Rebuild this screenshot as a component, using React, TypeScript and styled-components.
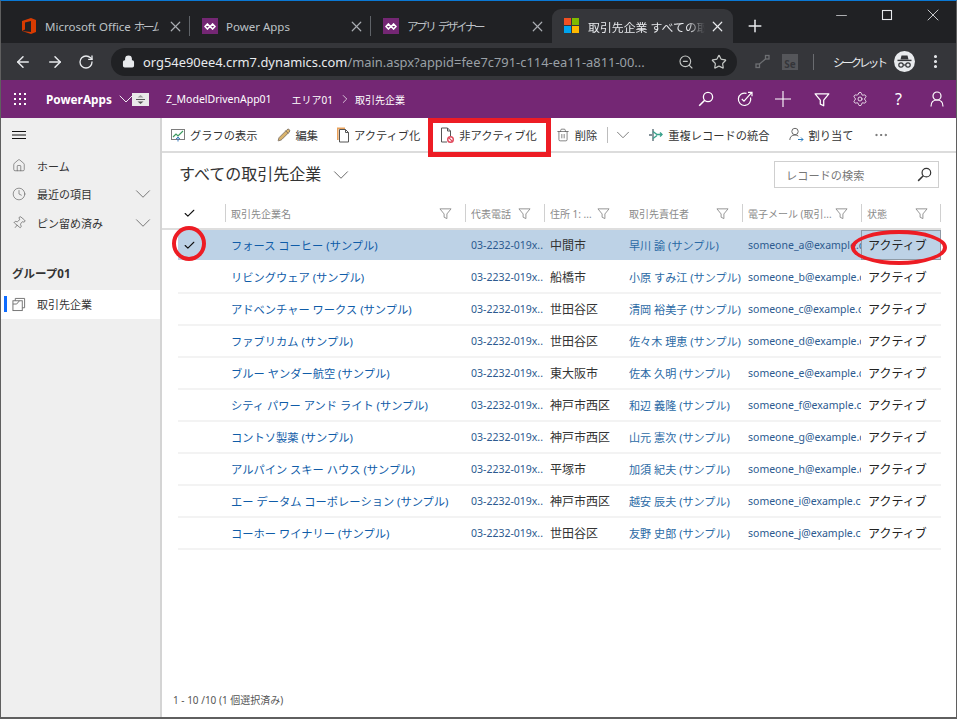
import styled, { createGlobalStyle } from 'styled-components';
import {
  ArrowLeft,
  ArrowRight,
  Check,
  ChevronDown,
  ChevronRight,
  Clock,
  Ellipsis,
  EllipsisVertical,
  House,
  Lock,
  Minus,
  Pencil,
  Pin,
  RotateCw,
  Settings,
  Star,
  Trash2,
  X,
  Plus,
  ZoomOut,
} from 'lucide-react';

const ACCOUNTS = [
  ['フォース コーヒー (サンプル)', '中間市', '早川 諭 (サンプル)', 'someone_a@example.com'],
  ['リビングウェア (サンプル)', '船橋市', '小原 すみ江 (サンプル)', 'someone_b@example.com'],
  ['アドベンチャー ワークス (サンプル)', '世田谷区', '清岡 裕美子 (サンプル)', 'someone_c@example.com'],
  ['ファブリカム (サンプル)', '世田谷区', '佐々木 理恵 (サンプル)', 'someone_d@example.com'],
  ['ブルー ヤンダー航空 (サンプル)', '東大阪市', '佐本 久明 (サンプル)', 'someone_e@example.com'],
  ['シティ パワー アンド ライト (サンプル)', '神戸市西区', '和辺 義隆 (サンプル)', 'someone_f@example.com'],
  ['コントソ製薬 (サンプル)', '神戸市西区', '山元 憲次 (サンプル)', 'someone_g@example.com'],
  ['アルパイン スキー ハウス (サンプル)', '平塚市', '加須 紀夫 (サンプル)', 'someone_h@example.com'],
  ['エー データム コーポレーション (サンプル)', '神戸市西区', '越安 辰夫 (サンプル)', 'someone_i@example.com'],
  ['コーホー ワイナリー (サンプル)', '世田谷区', '友野 史郎 (サンプル)', 'someone_j@example.com'],
];

const GRID_COLUMNS = '47px 240px 79px 79px 119px 119px 80px';

const GlobalStyle = createGlobalStyle`
  html, body { margin: 0; padding: 0; background: #fff; }
  * { box-sizing: border-box; }
  body { font-family: "Noto Sans", "Noto Sans CJK JP", sans-serif; }
`;

function OfficeLogo() {
  return (
    <svg width="16" height="16" viewBox="-1 0 16 16">
      <path d="M0 3 9 0l5 2v12l-5 2-9-3 9 1V3L3 4.5v7L0 13z" fill="#d83b01" />
    </svg>
  );
}

function PowerAppsLogo() {
  return (
    <LogoTile>
      <svg width="12" height="7" viewBox="0 0 12 7" fill="none" stroke="#fff" strokeWidth="1.6">
        <path d="M1 3.5 3.4 1l2.4 2.5L3.4 6zM6.2 3.5 8.6 1 11 3.5 8.6 6z" />
      </svg>
    </LogoTile>
  );
}

function WindowsLogo() {
  return (
    <svg width="20" height="20" viewBox="0 0 20 20">
      <rect x="0" y="2" width="7" height="7" fill="#f25022" />
      <rect x="8" y="2" width="7" height="7" fill="#7fba00" />
      <rect x="0" y="10" width="7" height="7" fill="#00a4ef" />
      <rect x="8" y="10" width="7" height="7" fill="#ffb900" />
    </svg>
  );
}

function IncognitoIcon() {
  return (
    <svg width="21" height="21" viewBox="0 0 21 21">
      <circle cx="10.5" cy="10.5" r="10.5" fill="#e8eaed" />
      <path d="M6.5 8.5 7.5 4.5h6l1 4z" fill="#35363a" />
      <rect x="3.5" y="8.7" width="14" height="1.4" fill="#35363a" />
      <circle cx="7" cy="14" r="2.2" fill="none" stroke="#35363a" strokeWidth="1.2" />
      <circle cx="14" cy="14" r="2.2" fill="none" stroke="#35363a" strokeWidth="1.2" />
      <path d="M9.2 14h2.6" stroke="#35363a" strokeWidth="1.2" />
    </svg>
  );
}

function WaffleIcon() {
  return (
    <svg width="13" height="13" viewBox="0 0 13 13" fill="#fff">
      {[0, 5, 10].flatMap(y =>
        [0, 5, 10].map(x => <rect key={`${x}-${y}`} x={x} y={y} width="2" height="2" />),
      )}
    </svg>
  );
}

function MaximizeIcon() {
  return (
    <svg width="12" height="12" viewBox="0 0 12 12" fill="none" stroke="currentColor" strokeWidth="1.1">
      <rect x="1.5" y="1.5" width="9" height="9" />
    </svg>
  );
}

function SortIcon() {
  return (
    <svg width="17" height="13" viewBox="0 0 17 13">
      <rect width="17" height="13" fill="#e9e9e9" />
      <path d="M5.5 4.5 8.5 2l3 2.5z" fill="#9b9b9b" />
      <rect x="4" y="6" width="9" height="1" fill="#555" />
      <path d="M5.5 8.5h6l-3 2.5z" fill="#555" />
    </svg>
  );
}

function SearchGlyph({ size, color }: { size: number; color: string }) {
  return (
    <svg width={size} height={size} viewBox="0 0 16 16" fill="none" stroke={color} strokeWidth="1.3">
      <circle cx="10" cy="6" r="4.6" />
      <path d="M6.7 9.3 1.2 14.8" strokeWidth="1.6" />
    </svg>
  );
}

function FilterGlyph({ size, color, width = 1 }: { size: number; color: string; width?: number }) {
  return (
    <svg width={size} height={size} viewBox="0 0 14 14" fill="none" stroke={color} strokeWidth={width}>
      <path d="M1 2h12L8.5 7.5V12.5L5.5 11V7.5Z" strokeLinejoin="round" />
    </svg>
  );
}

function TargetIcon() {
  return (
    <svg width="16" height="16" viewBox="0 0 16 16" fill="none" stroke="#fff" strokeWidth="1.2">
      <path d="M13.5 6.5A6.2 6.2 0 1 1 9.5 2.4" />
      <path d="m4.8 8 2.2 2.2L14.6 1.6M11 1.3h4v4" />
    </svg>
  );
}

function PlusGlyph() {
  return (
    <svg width="16" height="16" viewBox="0 0 16 16" stroke="#fff" strokeWidth="1.1">
      <path d="M8 0v16M0 8h16" />
    </svg>
  );
}

function PersonGlyph() {
  return (
    <svg width="14" height="16" viewBox="0 0 14 16" fill="none" stroke="#fff" strokeWidth="1.2">
      <circle cx="7" cy="5" r="4" />
      <path d="M1 15.5c0-4 2.4-6.5 6-6.5s6 2.500 6 6.500" />
    </svg>
  );
}

function HamburgerIcon() {
  return (
    <svg width="14" height="10" viewBox="0 0 14 10" stroke="#111" strokeWidth="1">
      <path d="M0 1.5h14M0 5h14M0 8.500h14" />
    </svg>
  );
}

function LinkExtensionIcon() {
  return (
    <svg width="15" height="15" viewBox="0 0 15 15" fill="none" stroke="#6d6f72" strokeWidth="1.3">
      <rect x="1" y="10" width="3.5" height="3.5" />
      <rect x="10.5" y="1.5" width="3.5" height="3.5" />
      <path d="M4.5 10 10.5 5" />
    </svg>
  );
}

function ChartIcon() {
  return (
    <svg width="14" height="14" viewBox="0 0 14 14" fill="none">
      <rect x="0.5" y="1.5" width="13" height="10" stroke="#7d7d7d" />
      <path d="m2 9 3-3 2 2 5-5" stroke="#3c9a5f" strokeWidth="1.2" />
      <path d="M7 13.5V9M5 11l2-2 2 2" stroke="#3f7fbf" />
    </svg>
  );
}

function ActivateIcon() {
  return (
    <svg width="12" height="16" viewBox="0 0 12 16" fill="none">
      <path d="M0.8 13V1.2H8" stroke="#e8a15b" strokeWidth="1.6" />
      <path d="M2.5 15V2.5H8.5L11.5 5.5V15Z" fill="#fff" stroke="#555" />
      <path d="M8.5 2.5V5.5H11.5" stroke="#555" />
    </svg>
  );
}

function DeactivateIcon() {
  return (
    <svg width="15" height="16" viewBox="-1 0 15 16" fill="none">
      <path d="M1.5 15V1H7.5L10.5 4V9M1.5 15H7" stroke="#555" />
      <path d="M7.5 1V4H10.5" stroke="#555" />
      <circle cx="10.5" cy="12.5" r="2.8" fill="#fff" stroke="#e0475a" strokeWidth="1.4" />
      <path d="m8.6 10.6 3.8 3.8" stroke="#e0475a" strokeWidth="1.2" />
    </svg>
  );
}

function MergeIcon() {
  return (
    <svg width="15" height="14" viewBox="0 0 15 14" fill="none" strokeWidth="1.4">
      <path d="M5 1v12M1 7h3" stroke="#5c6f78" />
      <path d="M5 3.5 9 6.5H14M5 10.5 9 7.5" stroke="#3aa28c" />
      <path d="m12 4.5 2 2-2 2" stroke="#3aa28c" />
    </svg>
  );
}

function AssignIcon() {
  return (
    <svg width="15" height="15" viewBox="0 0 15 15" fill="none" stroke="#6a6a6a">
      <circle cx="6" cy="4.5" r="3.2" />
      <path d="M0.8 13c0-3 2-5 5.2-5 1.4 0 2.5.4 3.3 1.1" />
      <path d="M9 12.5h5M12 10.5l2 2-2 2" stroke="#2f7fbf" />
    </svg>
  );
}

function AccountNavIcon() {
  return (
    <svg width="15" height="15" viewBox="0 0 15 15" fill="none" stroke="#6f6f6f">
      <path d="M3.5 3.5V1h10v10H11" />
      <rect x="1" y="3.5" width="10" height="10.5" />
      <path d="M1 7h4l3-3.5" />
    </svg>
  );
}

type CommandProps = { icon: React.ReactNode; label: string };

function Command({ icon, label }: CommandProps) {
  return (
    <CommandButton>
      {icon}
      <span>{label}</span>
    </CommandButton>
  );
}

function HeaderCell({ label, plain, last }: { label: string; plain?: boolean; last?: boolean }) {
  return (
    <HeadCell $plain={plain} $last={last}>
      <HeadLabel>{label}</HeadLabel>
      <FilterGlyph size={13} color="#8f8f8f" />
    </HeadCell>
  );
}

export default function App() {
  return (
    <Window>
      <GlobalStyle />
      <TabStrip>
        <Tab $width={178} $inset={9}>
          <OfficeLogo />
          <TabTitle>Microsoft Office <Kana>ホーム</Kana></TabTitle>
          <TabClose><X size={17} strokeWidth={1.7} /></TabClose>
        </Tab>
        <Tab $width={181} $inset={12}>
          <PowerAppsLogo />
          <TabTitle>Power Apps</TabTitle>
          <TabClose><X size={17} strokeWidth={1.7} /></TabClose>
        </Tab>
        <Tab $width={181} $inset={12} $last>
          <PowerAppsLogo />
          <TabTitle><Kana>アプリ デザイナー</Kana></TabTitle>
          <TabClose><X size={17} strokeWidth={1.7} /></TabClose>
        </Tab>
        <ActiveTab>
          <WindowsLogo />
          <ActiveTitle>取引先企業 すべての取引先企業</ActiveTitle>
          <TabClose $active><X size={17} strokeWidth={1.7} /></TabClose>
        </ActiveTab>
        <NewTab><Plus size={20} strokeWidth={1.8} /></NewTab>
        <WindowControls>
          <Minus size={17} strokeWidth={1} />
          <MaximizeIcon />
          <X size={20} strokeWidth={1} />
        </WindowControls>
      </TabStrip>

      <Toolbar>
        <NavButton><ArrowLeft size={18} strokeWidth={2} /></NavButton>
        <NavButton><ArrowRight size={18} strokeWidth={2} /></NavButton>
        <NavButton><RotateCw size={16} strokeWidth={2} /></NavButton>
        <AddressBar>
          <Lock size={13} strokeWidth={2.5} color="#e8eaed" fill="#e8eaed" />
          <Url>
            org54e90ee4.crm7.dynamics.com<UrlRest>/main.aspx?appid=fee7c791-c114-ea11-a811-00...</UrlRest>
          </Url>
          <ZoomOut size={16} strokeWidth={1.7} color="#c4c7c5" />
          <Star size={16} strokeWidth={1.8} color="#c4c7c5" />
        </AddressBar>
        <Extensions>
          <LinkExtensionIcon />
          <SeBadge>Se</SeBadge>
          <ToolbarDivider />
          <IncognitoLabel>シークレット</IncognitoLabel>
          <IncognitoIcon />
          <MenuDots><EllipsisVertical size={17} strokeWidth={2.4} color="#e8eaed" /></MenuDots>
        </Extensions>
      </Toolbar>

      <AppBar>
        <WaffleIcon />
        <AppName>PowerApps</AppName>
        <ChevronDown size={24} strokeWidth={0.9} />
        <SortBox><SortIcon /></SortBox>
        <AppTitle>Z_ModelDrivenApp01</AppTitle>
        <Crumb>エリア01</Crumb>
        <ChevronRight size={14} strokeWidth={1.2} />
        <Crumb $last>取引先企業</Crumb>
        <AppActions>
          <AppAction><SearchGlyph size={16} color="#fff" /></AppAction>
          <AppAction><TargetIcon /></AppAction>
          <AppAction><PlusGlyph /></AppAction>
          <AppAction><FilterGlyph size={17} color="#fff" width={1.1} /></AppAction>
          <AppAction><Settings size={16} strokeWidth={1.2} /></AppAction>
          <AppAction><HelpMark>?</HelpMark></AppAction>
          <AppAction><PersonGlyph /></AppAction>
        </AppActions>
      </AppBar>

      <Body>
        <SideNav>
          <Hamburger><HamburgerIcon /></Hamburger>
          <NavItem>
            <NavIcon><House size={15} strokeWidth={1.1} color="#5c5c5c" /></NavIcon>
            <span>ホーム</span>
          </NavItem>
          <NavItem>
            <NavIcon><Clock size={16} strokeWidth={1.1} color="#5c5c5c" /></NavIcon>
            <span>最近の項目</span>
            <NavChevron><ChevronDown size={26} strokeWidth={0.8} /></NavChevron>
          </NavItem>
          <NavItem>
            <NavIcon><TiltedPin><Pin size={14} strokeWidth={1.1} color="#5c5c5c" /></TiltedPin></NavIcon>
            <span>ピン留め済み</span>
            <NavChevron><ChevronDown size={26} strokeWidth={0.8} /></NavChevron>
          </NavItem>
          <GroupTitle>グループ01</GroupTitle>
          <NavItem $selected>
            <NavIcon><AccountNavIcon /></NavIcon>
            <span>取引先企業</span>
          </NavItem>
        </SideNav>

        <Main>
          <CommandBar>
            <Command icon={<ChartIcon />} label="グラフの表示" />
            <Command icon={<Pencil size={14} strokeWidth={1.3} color="#6b6157" fill="#d9b36c" />} label="編集" />
            <Command icon={<ActivateIcon />} label="アクティブ化" />
            <Command icon={<DeactivateIcon />} label="非アクティブ化" />
            <DeleteGroup>
              <Command icon={<Trash2 size={14} strokeWidth={1.2} color="#555" />} label="削除" />
              <CommandDivider />
              <ChevronDown size={22} strokeWidth={0.9} color="#666" />
            </DeleteGroup>
            <Command icon={<MergeIcon />} label="重複レコードの統合" />
            <Command icon={<AssignIcon />} label="割り当て" />
            <Ellipsis size={16} strokeWidth={1.2} color="#555" />
          </CommandBar>

          <TitleRow>
            <ViewTitle>
              <span>すべての取引先企業</span>
              <ChevronDown size={26} strokeWidth={0.8} color="#555" />
            </ViewTitle>
            <SearchBox>
              <span>レコードの検索</span>
              <SearchGlyph size={15} color="#333" />
            </SearchBox>
          </TitleRow>

          <HeadRow>
            <CheckCell><Check size={13} strokeWidth={2} color="#111" /></CheckCell>
            <HeaderCell label="取引先企業名" />
            <HeaderCell label="代表電話" />
            <HeaderCell label="住所 1: ..." />
            <HeaderCell label="取引先責任者" plain />
            <HeaderCell label="電子メール (取引..." />
            <HeaderCell label="状態" last />
          </HeadRow>

          {ACCOUNTS.map(([name, city, owner, email], i) => (
            <Row key={email} $selected={i === 0}>
              <CheckCell>{i === 0 && <Check size={13} strokeWidth={2} color="#111" />}</CheckCell>
              <NameCell>{name}</NameCell>
              <PhoneCell>03-2232-019x..</PhoneCell>
              <CityCell>{city}</CityCell>
              <OwnerCell>{owner}</OwnerCell>
              <EmailCell>{email}</EmailCell>
              <StatusCell $focused={i === 0}>アクティブ</StatusCell>
            </Row>
          ))}

          <Footer>1 - 10 /10 (1 個選択済み)</Footer>
        </Main>
      </Body>

      <RectMark />
      <CircleMark />
      <EllipseMark />
    </Window>
  );
}

const Window = styled.div`
  position: relative;
  width: 957px;
  height: 719px;
  display: flex;
  flex-direction: column;
  overflow: hidden;
  background: #202124;
  border-left: 1px solid #5f5f5f;
  border-right: 1px solid #5f5f5f;
  border-bottom: 2px solid #5f5f5f;
  border-top: 1px solid #0a78d4;
`;

const TabStrip = styled.div`
  height: 42px;
  flex: none;
  display: flex;
  align-items: flex-end;
  padding-left: 11px;
  background: #202124;
`;

const Tab = styled.div<{ $width: number; $inset: number; $last?: boolean }>`
  width: ${p => p.$width}px;
  height: 34px;
  display: flex;
  align-items: center;
  padding: 0 6px 0 ${p => p.$inset}px;
  gap: 8px;
  color: #bdc1c6;
  position: relative;

  &::after {
    content: '';
    display: ${p => (p.$last ? 'none' : 'block')};
    position: absolute;
    right: 0;
    top: 7px;
    height: 20px;
    width: 1px;
    background: #5f6368;
  }
`;

const LogoTile = styled.div`
  width: 16px;
  height: 16px;
  flex: none;
  background: #742774;
  display: flex;
  align-items: center;
  justify-content: center;
`;

const TabTitle = styled.span`
  flex: 1;
  min-width: 0;
  font-size: 11.5px;
  white-space: nowrap;
  overflow: hidden;
  color: #bdc1c6;
`;

const Kana = styled.span`
  letter-spacing: -2.4px;
  word-spacing: 3px;
`;

const ActiveTitle = styled(TabTitle)`
  font-size: 11.9px;
  color: #e8eaed;
  mask-image: linear-gradient(to right, #000 85%, transparent);
`;

const TabClose = styled.span<{ $active?: boolean }>`
  flex: none;
  display: flex;
  color: ${p => (p.$active ? '#e8eaed' : '#a9adb2')};
`;

const ActiveTab = styled.div`
  width: 181px;
  height: 34px;
  display: flex;
  align-items: center;
  gap: 4px;
  padding: 0 7px 0 12px;
  background: #35363a;
  border-radius: 9px 9px 0 0;
`;

const NewTab = styled.div`
  height: 34px;
  margin-left: 12px;
  display: flex;
  align-items: center;
  color: #e8eaed;
`;

const WindowControls = styled.div`
  width: 110px;
  margin: 0 13px 0 auto;
  align-self: flex-start;
  padding-top: 4px;
  display: flex;
  align-items: center;
  justify-content: space-between;
  color: #e8eaed;
`;

const Toolbar = styled.div`
  height: 37px;
  flex: none;
  display: flex;
  align-items: center;
  padding-left: 13px;
  background: #35363a;
`;

const NavButton = styled.div`
  width: 32px;
  display: flex;
  justify-content: flex-start;
  color: #e8eaed;
`;

const AddressBar = styled.div`
  width: 626px;
  height: 28px;
  margin-left: 1px;
  display: flex;
  align-items: center;
  gap: 8px;
  padding: 0 10px 0 11px;
  background: #202124;
  border-radius: 14px;

  svg:last-child {
    margin-left: 9px;
  }
`;

const Url = styled.div`
  flex: 1;
  min-width: 0;
  font-family: "Noto Sans", sans-serif;
  font-size: 12.9px;
  white-space: nowrap;
  overflow: hidden;
  color: #e8eaed;
`;

const UrlRest = styled.span`
  color: #9aa0a6;
`;

const Extensions = styled.div`
  display: flex;
  align-items: center;
  margin-left: 18px;
`;

const SeBadge = styled.div`
  width: 16px;
  height: 16px;
  margin-left: 12px;
  background: #55565a;
  color: #35363a;
  font-size: 10px;
  font-weight: 700;
  line-height: 20px;
  text-align: center;
`;

const ToolbarDivider = styled.div`
  width: 1px;
  height: 16px;
  margin: 0 19px 0 15px;
  background: #6a6c70;
`;

const IncognitoLabel = styled.span`
  width: 61px;
  font-size: 11.5px;
  letter-spacing: -2.8px;
  white-space: nowrap;
  color: #e8eaed;
`;

const MenuDots = styled.span`
  display: flex;
  margin-left: 12px;
`;

const AppBar = styled.div`
  height: 38px;
  flex: none;
  display: flex;
  align-items: center;
  padding-left: 13px;
  background: #742774;
  color: #fff;
`;

const AppName = styled.span`
  margin: 0 2px 0 19px;
  font-size: 11.8px;
  font-weight: 700;
`;

const SortBox = styled.div`
  display: flex;
  margin-left: -6px;
`;

const AppTitle = styled.span`
  margin: 0 20px 0 17px;
  font-size: 10.5px;
  white-space: nowrap;
`;

const Crumb = styled.span<{ $last?: boolean }>`
  margin: ${p => (p.$last ? '0 0 0 3px' : '0 5px 0 0')};
  font-size: 10px;
  white-space: nowrap;
`;

const AppActions = styled.div`
  width: 247px;
  margin: 0 11px 0 auto;
  display: flex;
  align-items: center;
  justify-content: space-between;
`;

const AppAction = styled.span`
  width: 16px;
  height: 20px;
  display: flex;
  align-items: center;
  justify-content: center;
`;

const HelpMark = styled.span`
  font-size: 16px;
`;

const Body = styled.div`
  flex: 1;
  min-height: 0;
  display: flex;
  background: #fff;
`;

const SideNav = styled.nav`
  width: 161px;
  flex: none;
  background: #efefef;
  border-right: 2px solid #d4d4d4;
  font-size: 11px;
  color: #333;
`;

const Hamburger = styled.div`
  height: 33.5px;
  padding-left: 11px;
  display: flex;
  align-items: center;
`;

const NavItem = styled.div<{ $selected?: boolean }>`
  position: relative;
  height: 28.5px;
  display: flex;
  align-items: center;
  gap: 11px;
  padding-left: 11px;
  background: ${p => (p.$selected ? '#fff' : 'transparent')};

  &::before {
    content: '';
    display: ${p => (p.$selected ? 'block' : 'none')};
    position: absolute;
    left: 3px;
    top: 6px;
    width: 3px;
    height: 16px;
    background: #0f6cff;
  }
`;

const NavIcon = styled.span`
  width: 14px;
  display: flex;
  justify-content: center;
`;

const TiltedPin = styled.span`
  display: flex;
  transform: rotate(40deg);
`;

const NavChevron = styled.span`
  display: flex;
  margin-left: auto;
  margin-right: 4px;
  color: #666;
`;

const GroupTitle = styled.div`
  height: 31px;
  margin-top: 22px;
  padding-left: 11px;
  font-size: 11.5px;
  font-weight: 700;
  line-height: 30px;
  color: #333;
`;

const Main = styled.main`
  flex: 1;
  min-width: 0;
  display: flex;
  flex-direction: column;
`;

const CommandBar = styled.div`
  height: 35px;
  flex: none;
  display: flex;
  align-items: center;
  gap: 19px;
  padding-left: 9px;
  border-bottom: 2px solid #dcdcdc;
`;

const CommandButton = styled.div`
  display: flex;
  align-items: center;
  gap: 5px;
  font-size: 11.25px;
  white-space: nowrap;
  color: #333;
`;

const DeleteGroup = styled.div`
  display: flex;
  align-items: center;
  margin-right: -5px;
`;

const CommandDivider = styled.div`
  width: 1px;
  height: 16px;
  margin: 0 4px 0 10px;
  background: #bdbdbd;
`;

const TitleRow = styled.div`
  height: 47px;
  flex: none;
  display: flex;
  justify-content: space-between;
  padding: 8px 17px 0 17px;
`;

const ViewTitle = styled.h1`
  display: flex;
  align-items: center;
  gap: 7px;
  height: 27px;
  margin: 0;
  font-size: 16px;
  font-weight: 400;
  color: #333;

  span {
    padding-bottom: 3px;
  }
`;

const SearchBox = styled.div`
  width: 165px;
  height: 27px;
  display: flex;
  align-items: center;
  justify-content: space-between;
  padding: 0 6px 0 11px;
  border: 1px solid #cfcfcf;
  font-size: 11.2px;
  color: #777;
`;

const HeadRow = styled.div`
  width: 779px;
  height: 30px;
  flex: none;
  display: grid;
  grid-template-columns: ${GRID_COLUMNS};
  align-items: center;
  padding: 0 0 2px 16px;
  border-bottom: 2px solid #dedede;
`;

const HeadCell = styled.div<{ $plain?: boolean; $last?: boolean }>`
  height: 18px;
  display: flex;
  align-items: center;
  justify-content: space-between;
  padding: 0 12px 0 5px;
  border-left: 1px solid ${p => (p.$plain ? 'transparent' : '#d0d0d0')};
  border-right: 1px solid ${p => (p.$last ? '#d0d0d0' : 'transparent')};
  min-width: 0;
`;

const HeadLabel = styled.span`
  font-size: 10px;
  white-space: nowrap;
  overflow: hidden;
  color: #8a8a8a;
`;

const Row = styled.div<{ $selected?: boolean }>`
  width: 763px;
  height: 32px;
  flex: none;
  margin-left: 16px;
  display: grid;
  grid-template-columns: ${GRID_COLUMNS};
  align-items: center;
  background-clip: padding-box;
  background-color: ${p => (p.$selected ? '#bdd2e6' : 'transparent')};
  border-bottom: 2px solid ${p => (p.$selected ? '#fff' : '#f3f3f3')};
`;

const CheckCell = styled.div`
  display: flex;
  justify-content: flex-start;
  padding-left: 5px;
`;

const Cell = styled.div`
  min-width: 0;
  white-space: nowrap;
  overflow: hidden;
`;

const NameCell = styled(Cell)`
  padding-left: 6px;
  font-size: 11.25px;
  color: #0f5ca8;
`;

const PhoneCell = styled(Cell)`
  padding-left: 6px;
  font-size: 10.5px;
  color: #2c5a8f;
`;

const CityCell = styled(Cell)`
  padding-left: 6px;
  font-size: 12px;
  color: #333;
`;

const OwnerCell = styled(Cell)`
  padding-left: 6px;
  font-size: 11.1px;
  color: #2b6aa5;
`;

const EmailCell = styled(Cell)`
  padding-left: 6px;
  font-size: 10.5px;
  color: #2c5a8f;
`;

const StatusCell = styled(Cell)<{ $focused?: boolean }>`
  height: 30px;
  line-height: 29px;
  padding-left: 6px;
  font-size: 12px;
  color: #222;
  border: 1px solid ${p => (p.$focused ? '#8f9aa5' : 'transparent')};
`;

const Footer = styled.div`
  margin-top: auto;
  height: 34px;
  padding-left: 11px;
  font-size: 10px;
  line-height: 34px;
  color: #555;
`;

const RectMark = styled.div`
  position: absolute;
  left: 427px;
  top: 117px;
  width: 123px;
  height: 39px;
  border: 5px solid #ed1c24;
`;

const CircleMark = styled.div`
  position: absolute;
  left: 171px;
  top: 225px;
  width: 34px;
  height: 35px;
  border: 4.5px solid #ed1c24;
  border-radius: 50%;
`;

const EllipseMark = styled.div`
  position: absolute;
  left: 850px;
  top: 229px;
  width: 96px;
  height: 35px;
  border: 4.5px solid #ed1c24;
  border-radius: 50%;
`;
